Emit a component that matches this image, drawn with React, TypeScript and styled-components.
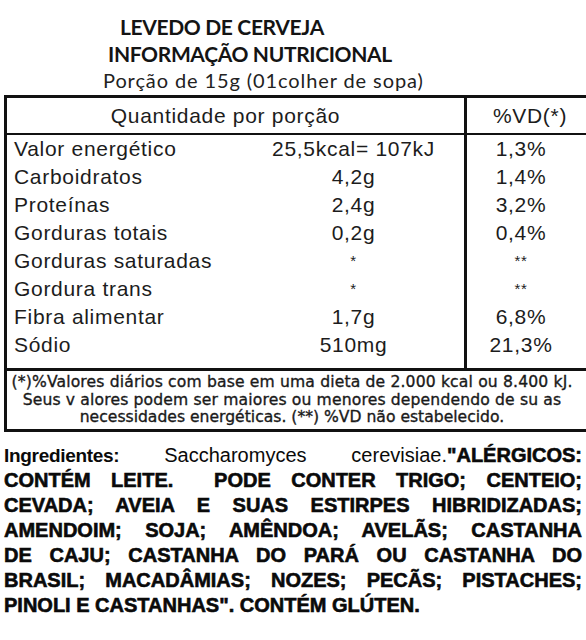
import React from "react";
import styled, { createGlobalStyle } from "styled-components";

const Global = createGlobalStyle`
  html, body { margin: 0; padding: 0; background: #fff; overflow: hidden; }
  body { width: 586px; height: 640px; }
`;

const Page = styled.main`
  width: 586px;
  height: 640px;
  overflow: hidden;
  color: #111;
`;

const TitleBlock = styled.header`
  padding-top: 13px;
  display: flex;
  flex-direction: column;
`;

const TitleLine = styled.h1<{ $indent: number; $h: number }>`
  margin: 0;
  padding-left: ${(p) => p.$indent}px;
  font-family: Lato, "Open Sans", sans-serif;
  font-weight: 700;
  font-size: 21px;
  letter-spacing: -0.35px;
  line-height: ${(p) => p.$h}px;
  white-space: nowrap;
  color: #141414;
`;

const Serving = styled.div`
  padding-left: 103px;
  font-family: Lato, "Open Sans", sans-serif;
  font-size: 20px;
  letter-spacing: 0.9px;
  line-height: 26px;
  white-space: nowrap;
  color: #222;
`;

const Table = styled.section`
  margin: 2px 0 0 4px;
  width: 592px;
  border: 3px solid #111;
  font-family: "Liberation Sans", Arial, sans-serif;
  font-size: 21px;
  letter-spacing: 0.7px;
  color: #1c1c1c;
`;

const Grid = styled.div`
  display: grid;
  grid-template-columns: 236px 221px 1fr;
`;

const HeadMain = styled.div`
  grid-column: span 2;
  height: 35px;
  line-height: 35px;
  text-align: center;
  padding-right: 20px;
  border-bottom: 2px solid #111;
`;

const HeadVd = styled.div`
  height: 35px;
  line-height: 35px;
  text-align: center;
  padding-right: 6px;
  border-left: 3px solid #111;
  border-bottom: 2px solid #111;
`;

const Label = styled.div`
  height: 28px;
  line-height: 28px;
  padding-left: 7px;
  white-space: nowrap;
`;

const Value = styled.div`
  height: 28px;
  line-height: 28px;
  text-align: center;
  white-space: nowrap;
`;

const Vd = styled.div`
  height: 28px;
  line-height: 28px;
  text-align: center;
  padding-right: 24px;
  border-left: 3px solid #111;
  white-space: nowrap;
`;

const Star = styled.span`
  font-size: 15px;
  vertical-align: 2px;
`;

const SpacerCell = styled.div<{ $vd?: boolean }>`
  height: 9px;
  border-left: ${(p) => (p.$vd ? "3px solid #111" : "none")};
`;

const Footnote = styled.section`
  margin-left: 4px;
  width: 570px;
  border: 3px solid #111;
  border-top: none;
  padding: 3px 22px 2px 0;
  box-sizing: content-box;
  font-family: "DejaVu Sans", Verdana, sans-serif;
  font-size: 15.6px;
  line-height: 17.5px;
  color: #1a1a1a;
  -webkit-text-stroke: 0.35px #1a1a1a;
`;

const NoteLine = styled.div<{ $spacing?: number }>`
  text-align: center;
  white-space: nowrap;
  letter-spacing: ${(p) => p.$spacing ?? 0}px;
`;

const Ingredients = styled.section`
  margin-top: 11px;
  padding: 0 4px;
  font-family: "Liberation Sans", Arial, sans-serif;
  font-size: 20px;
  line-height: 25px;
  color: #0a0a0a;
`;

const Line = styled.div<{ $last?: boolean }>`
  text-align: ${(p) => (p.$last ? "left" : "justify")};
  text-align-last: ${(p) => (p.$last ? "left" : "justify")};
  white-space: normal;
`;

const Lead = styled.span`
  font-weight: 700;
  font-size: 19px;
  letter-spacing: -0.3px;
`;

const Plain = styled.span`
  font-weight: 400;
  font-size: 20px;
`;

const Heavy = styled.span`
  font-weight: 700;
  -webkit-text-stroke: 0.6px #0a0a0a;
`;

const rows: [string, string, string][] = [
  ["Valor energético", "25,5kcal= 107kJ", "1,3%"],
  ["Carboidratos", "4,2g", "1,4%"],
  ["Proteínas", "2,4g", "3,2%"],
  ["Gorduras totais", "0,2g", "0,4%"],
  ["Gorduras saturadas", "*", "**"],
  ["Gordura trans", "*", "**"],
  ["Fibra alimentar", "1,7g", "6,8%"],
  ["Sódio", "510mg", "21,3%"],
];

const starOrText = (s: string) => (/^\*+$/.test(s) ? <Star>{s}</Star> : s);

export default function App() {
  return (
    <Page>
      <Global />
      <TitleBlock>
        <TitleLine $indent={120} $h={28}>LEVEDO DE CERVEJA</TitleLine>
        <TitleLine $indent={108} $h={26}>INFORMAÇÃO NUTRICIONAL</TitleLine>
        <Serving>Porção de 15g (01colher de sopa)</Serving>
      </TitleBlock>

      <Table>
        <Grid>
          <HeadMain>Quantidade por porção</HeadMain>
          <HeadVd>%VD(*)</HeadVd>
          {rows.map(([l, v, d]) => (
            <React.Fragment key={l}>
              <Label>{l}</Label>
              <Value>{starOrText(v)}</Value>
              <Vd>{starOrText(d)}</Vd>
            </React.Fragment>
          ))}
          <SpacerCell />
          <SpacerCell />
          <SpacerCell $vd />
        </Grid>
      </Table>

      <Footnote>
        <NoteLine $spacing={0.15}>(*)%Valores diários com base em uma dieta de 2.000 kcal ou 8.400 kJ.</NoteLine>
        <NoteLine $spacing={0.15}>Seus v alores podem ser maiores ou menores dependendo de su as</NoteLine>
        <NoteLine>necessidades energéticas. (**) %VD não estabelecido.</NoteLine>
      </Footnote>

      <Ingredients>
        <Line>
          <Lead>Ingredientes:</Lead> <Plain>Saccharomyces</Plain> <Plain>cerevisiae.</Plain>
          <Heavy>"ALÉRGICOS:</Heavy>
        </Line>
        <Line><Heavy>CONTÉM LEITE.&nbsp; PODE CONTER TRIGO; CENTEIO;</Heavy></Line>
        <Line><Heavy>CEVADA; AVEIA E SUAS ESTIRPES HIBRIDIZADAS;</Heavy></Line>
        <Line><Heavy>AMENDOIM; SOJA; AMÊNDOA; AVELÃS; CASTANHA</Heavy></Line>
        <Line><Heavy>DE CAJU; CASTANHA DO PARÁ OU CASTANHA DO</Heavy></Line>
        <Line><Heavy>BRASIL; MACADÂMIAS; NOZES; PECÃS; PISTACHES;</Heavy></Line>
        <Line $last><Heavy>PINOLI E CASTANHAS". CONTÉM GLÚTEN.</Heavy></Line>
      </Ingredients>
    </Page>
  );
}
